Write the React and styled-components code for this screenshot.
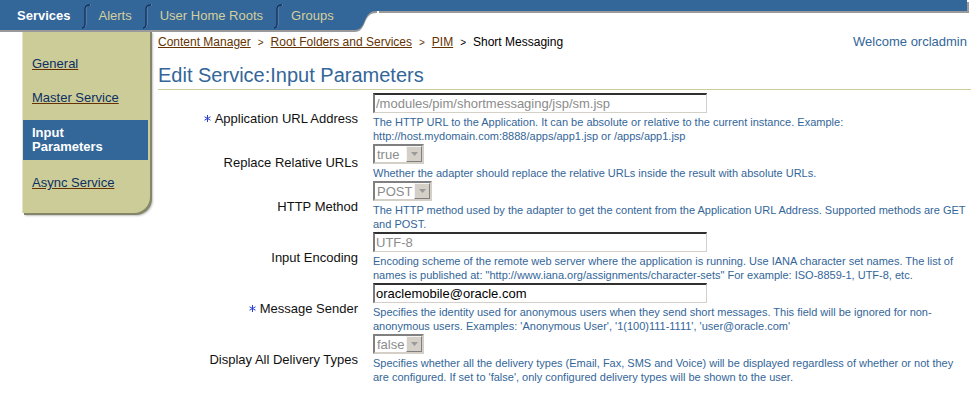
import React from "react";
import styled, { createGlobalStyle } from "styled-components";

const GlobalStyle = createGlobalStyle`
  * { box-sizing: border-box; }
  body {
    margin: 0;
    background: #fff;
    font-family: "Liberation Sans", Arial, sans-serif;
  }
`;

const Header = styled.div`
  position: relative;
  z-index: 1;
  display: flex;
  align-items: flex-start;
  height: 30px;
`;

const TabBar = styled.div`
  display: flex;
  align-items: center;
  width: 355px;
  height: 30px;
  padding: 1px 0 0 17px;
  background: #336699;
  box-shadow: 0 2px 0 #9a9a9a;
`;

const Tab = styled.span`
  font-size: 13px;
  line-height: 16px;
  color: ${(p) => (p.$active ? "#ffffff" : "#d4d09e")};
  font-weight: ${(p) => (p.$active ? "bold" : "normal")};
  white-space: nowrap;
`;

const DividerSvg = styled.svg`
  flex: none;
  margin: 0 8px 0 10px;
`;

const RightBar = styled.div`
  flex: 1;
  height: 11px;
  margin-right: 4px;
  background: #336699;
  box-shadow: 2px 2px 0 #9a9a9a;
`;

const Main = styled.div`
  display: flex;
  align-items: flex-start;
`;

const Sidebar = styled.nav`
  flex: none;
  width: 128px;
  margin: 0 8px 0 22px;
  padding: 17px 0 13px;
  background: #cccc99;
  border-left: 1px solid #e4e4c0;
  border-bottom-right-radius: 16px;
  box-shadow: 2px 2px 0 #85856a, 3px 3px 2px #c4c4c4;
`;

const NavItem = styled.a`
  display: block;
  margin-top: ${(p) => p.$gap || 0}px;
  padding: 10px 9px;
  font-size: 13px;
  line-height: 14px;
  color: #0b2f62;
  text-decoration: underline;
  text-decoration-color: #663300;
`;

const NavSelected = styled.div`
  margin: 5px 2px 0 0;
  padding: 6px 9px;
  background: #336699;
  color: #fff;
  font-size: 13px;
  font-weight: bold;
  line-height: 14px;
`;

const Content = styled.div`
  flex: 1;
  min-width: 0;
`;

const CrumbRow = styled.div`
  display: flex;
  justify-content: space-between;
  align-items: baseline;
  padding: 4px 4px 0 0;
  line-height: 16px;
`;

const Crumbs = styled.div`
  font-size: 12px;
  color: #000;
`;

const CrumbLink = styled.a`
  color: #663300;
  text-decoration: underline;
`;

const Sep = styled.span`
  font-size: 10px;
  margin: 0 7px;
  color: ${(p) => (p.$last ? "#000" : "#663300")};
`;

const Welcome = styled.span`
  font-size: 13px;
  color: #336699;
`;

const Title = styled.h1`
  margin: 12px 0 0;
  padding-bottom: 2px;
  border-bottom: 1px solid #cccc99;
  font-size: 20px;
  font-weight: normal;
  line-height: 24px;
  color: #336699;
`;

const Form = styled.div`
  display: grid;
  grid-template-columns: 200px 1fr;
  column-gap: 15px;
  margin-top: 3px;
`;

const Label = styled.div`
  display: flex;
  align-items: center;
  justify-content: flex-end;
  font-size: 13px;
  color: #111;
  white-space: nowrap;
`;

const Star = styled.svg`
  margin-right: 4px;
`;

const Field = styled.div`
  padding-bottom: 1px;
`;

const TextInput = styled.input`
  display: block;
  width: 334px;
  height: 20px;
  margin: 0;
  padding: 0 1px;
  border-style: solid;
  border-width: 2px 1px 1px 2px;
  border-color: #303030 #d4d0c8 #d4d0c8 #7a7a7a;
  background: #fff;
  font: 13px "Liberation Sans", Arial, sans-serif;
  color: ${(p) => (p.$muted ? "#8c8c8c" : "#000")};
  outline: none;
`;

const Select = styled.div`
  display: flex;
  align-items: center;
  width: ${(p) => p.$w}px;
  height: 20px;
  padding-left: 2px;
  border: 2px solid;
  border-color: #808080 #d4d0c8 #d4d0c8 #808080;
  background: #fff;
  font-size: 13px;
  color: #8c8c8c;
`;

const Arrow = styled.span`
  display: flex;
  align-items: center;
  justify-content: center;
  margin-left: auto;
  width: 16px;
  height: 16px;
  background: #d4d0c8;
  border: 1px solid;
  border-color: #f4f4f4 #808080 #808080 #f4f4f4;
`;

const Desc = styled.div`
  max-width: 594px;
  margin-top: 2px;
  font-size: 11px;
  line-height: 14px;
  color: #336699;
`;

const Divider = () => (
  <DividerSvg width="10" height="26" viewBox="0 0 10 26">
    <path d="M1 25 Q4 25 4 21 V6 Q4 2 9 2" fill="none" stroke="#6f90bd" strokeWidth="1" transform="translate(1 0)" />
    <path d="M1 25 Q4 25 4 21 V6 Q4 2 9 2" fill="none" stroke="#142f57" strokeWidth="1.3" />
  </DividerSvg>
);

const Curve = () => (
  <svg width="22" height="32" viewBox="0 0 22 32" style={{ flex: "none" }}>
    <path d="M0 2 H22 V13 C15 13 13 16 10 22 C8 28 5 32 0 32 Z" fill="#9a9a9a" />
    <path d="M0 0 H22 V11 C15 11 13 14 10 20 C8 26 5 30 0 30 Z" fill="#336699" />
  </svg>
);

const Required = () => (
  <Star width="7" height="7" viewBox="0 0 7 7">
    <g stroke="#2a3fd0" strokeWidth="1">
      <line x1="3.5" y1="0" x2="3.5" y2="7" />
      <line x1="0.5" y1="1.8" x2="6.5" y2="5.2" />
      <line x1="0.5" y1="5.2" x2="6.5" y2="1.8" />
    </g>
  </Star>
);

const rows = [
  {
    label: "Application URL Address",
    required: true,
    input: "/modules/pim/shortmessaging/jsp/sm.jsp",
    muted: true,
    desc: "The HTTP URL to the Application. It can be absolute or relative to the current instance. Example: http://host.mydomain.com:8888/apps/app1.jsp or /apps/app1.jsp",
  },
  {
    label: "Replace Relative URLs",
    select: "true",
    w: 51,
    desc: "Whether the adapter should replace the relative URLs inside the result with absolute URLs.",
  },
  {
    label: "HTTP Method",
    select: "POST",
    w: 59,
    desc: "The HTTP method used by the adapter to get the content from the Application URL Address. Supported methods are GET and POST.",
  },
  {
    label: "Input Encoding",
    input: "UTF-8",
    muted: true,
    desc: 'Encoding scheme of the remote web server where the application is running. Use IANA character set names. The list of names is published at: "http://www.iana.org/assignments/character-sets" For example: ISO-8859-1, UTF-8, etc.',
  },
  {
    label: "Message Sender",
    required: true,
    input: "oraclemobile@oracle.com",
    desc: "Specifies the identity used for anonymous users when they send short messages. This field will be ignored for non-anonymous users. Examples: 'Anonymous User', '1(100)111-1111', 'user@oracle.com'",
  },
  {
    label: "Display All Delivery Types",
    select: "false",
    w: 51,
    desc: "Specifies whether all the delivery types (Email, Fax, SMS and Voice) will be displayed regardless of whether or not they are configured. If set to 'false', only configured delivery types will be shown to the user.",
  },
];

const App = () => {
  return (
    <>
      <GlobalStyle />
      <Header>
        <TabBar>
          <Tab $active>Services</Tab>
          <Divider />
          <Tab>Alerts</Tab>
          <Divider />
          <Tab>User Home Roots</Tab>
          <Divider />
          <Tab>Groups</Tab>
        </TabBar>
        <Curve />
        <RightBar />
      </Header>
      <Main>
        <Sidebar>
          <NavItem>General</NavItem>
          <NavItem>Master Service</NavItem>
          <NavSelected>
            Input
            <br />
            Parameters
          </NavSelected>
          <NavItem $gap={6}>Async Service</NavItem>
        </Sidebar>
        <Content>
          <CrumbRow>
            <Crumbs>
              <CrumbLink>Content Manager</CrumbLink>
              <Sep>&gt;</Sep>
              <CrumbLink>Root Folders and Services</CrumbLink>
              <Sep>&gt;</Sep>
              <CrumbLink>PIM</CrumbLink>
              <Sep $last>&gt;</Sep>
              Short Messaging
            </Crumbs>
            <Welcome>Welcome orcladmin</Welcome>
          </CrumbRow>
          <Title>Edit Service:Input Parameters</Title>
          <Form>
            {rows.map((r) => (
              <React.Fragment key={r.label}>
                <Label>
                  {r.required && <Required />}
                  {r.label}
                </Label>
                <Field>
                  {r.input !== undefined ? (
                    <TextInput $muted={r.muted} readOnly value={r.input} />
                  ) : (
                    <Select $w={r.w}>
                      {r.select}
                      <Arrow>
                        <svg width="7" height="4" viewBox="0 0 7 4">
                          <path d="M0 0 H7 L3.5 4 Z" fill="#9a9a9a" />
                        </svg>
                      </Arrow>
                    </Select>
                  )}
                  <Desc>{r.desc}</Desc>
                </Field>
              </React.Fragment>
            ))}
          </Form>
        </Content>
      </Main>
    </>
  );
};

export default App;
